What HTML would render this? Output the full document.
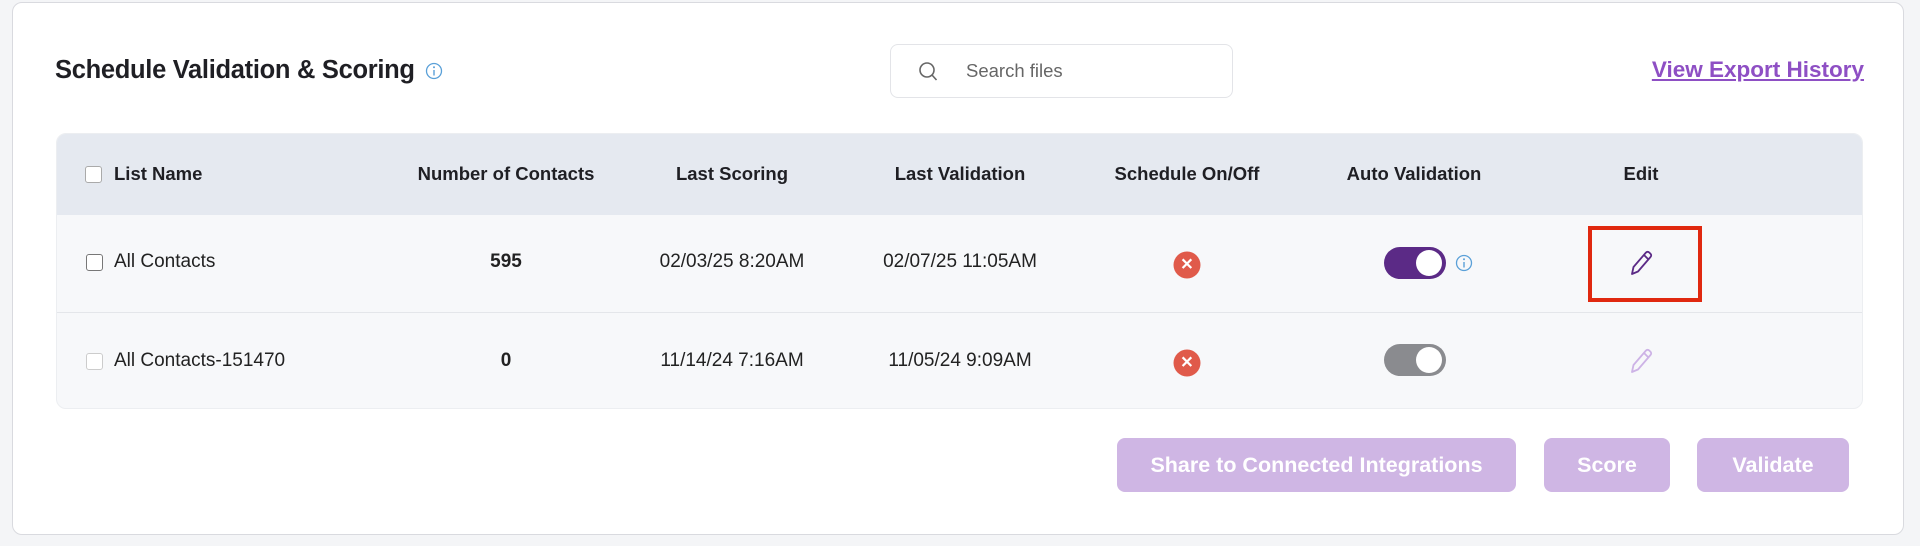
<!DOCTYPE html>
<html><head><style>
*{box-sizing:border-box;margin:0;padding:0}
body{width:1920px;height:546px;background:#f4f5f7;font-family:"Liberation Sans",sans-serif;position:relative;overflow:hidden;color:#222}
.card{position:absolute;left:12px;top:2px;width:1892px;height:533px;background:#fff;border:1px solid #d9dadf;border-radius:10px}
.abs{position:absolute}
.title{left:55px;top:56px;font-size:25.5px;font-weight:bold;color:#1f1f24;letter-spacing:-0.3px}
.search{left:890px;top:44px;width:343px;height:54px;border:1px solid #e3e4e8;border-radius:8px}
.link{right:56px;top:57px;font-size:22.5px;font-weight:bold;color:#8e4fc4;text-decoration:underline}
.table{left:56px;top:133px;width:1807px;height:276px;border-radius:10px;background:#f7f8fa;overflow:hidden;border:1px solid #eceef1}
.hdr{position:absolute;left:0;top:0;width:100%;height:81px;background:#e5e9f0}
.sep{position:absolute;left:0;top:178px;width:100%;height:1px;background:#e4e6ea}
.c{position:absolute;transform:translate(-50%,-50%);white-space:nowrap;font-size:19px}
.h{font-weight:bold;font-size:18.5px;color:#1f1f24}
.cb{position:absolute;width:17px;height:17px;border:1.5px solid #777;border-radius:3px;background:#fff}
.x{width:27px;height:27px;border-radius:50%;background:#e05a4a;color:#fff;font-weight:bold;font-size:16px;line-height:27px;text-align:center}
.tog{width:62px;height:32px;border-radius:16px}
.tog::after{content:"";position:absolute;right:4px;top:3px;width:26px;height:26px;border-radius:50%;background:#fff}
.btn{position:absolute;top:438px;height:54px;background:#cfb6e4;border-radius:8px;color:#fff;font-weight:bold;font-size:21.5px;line-height:54px;text-align:center}
</style></head><body>
<div class="card"></div>
<div class="abs title">Schedule Validation &amp; Scoring</div>
<svg class="abs" style="left:425px;top:62px" width="18" height="18" viewBox="0 0 18 18"><circle cx="9" cy="9" r="7.5" fill="none" stroke="#5aa0d8" stroke-width="1.3"/><circle cx="9" cy="5.3" r="1" fill="#5aa0d8"/><path d="M9 8v5.5" stroke="#5aa0d8" stroke-width="1.4"/></svg>
<div class="abs search"></div>
<svg class="abs" style="left:918px;top:61px" width="20" height="22" viewBox="0 0 20 22"><circle cx="9" cy="9" r="7" fill="none" stroke="#666" stroke-width="1.6"/><path d="M14 14l4.5 5" stroke="#666" stroke-width="1.6"/></svg>
<div class="abs" style="left:966px;top:60px;font-size:18.5px;color:#666">Search files</div>
<div class="abs link">View Export History</div>
<div class="abs table">
<div class="hdr"></div><div class="sep"></div>
</div>
<div class="cb" style="left:85px;top:166px;border-color:#aaa"></div>
<div class="abs h" style="left:114px;top:163px">List Name</div>
<div class="c h" style="left:506px;top:174px">Number of Contacts</div>
<div class="c h" style="left:732px;top:174px">Last Scoring</div>
<div class="c h" style="left:960px;top:174px">Last Validation</div>
<div class="c h" style="left:1187px;top:174px">Schedule On/Off</div>
<div class="c h" style="left:1414px;top:174px">Auto Validation</div>
<div class="c h" style="left:1641px;top:174px">Edit</div>

<div class="cb" style="left:86px;top:254px"></div>
<div class="abs" style="left:114px;top:251px;font-size:19px">All Contacts</div>
<div class="c" style="left:506px;top:262px;font-weight:bold">595</div>
<div class="c" style="left:732px;top:262px">02/03/25 8:20AM</div>
<div class="c" style="left:960px;top:262px">02/07/25 11:05AM</div>
<div class="c x" style="left:1187px;top:265px">✕</div>
<div class="c tog" style="left:1415px;top:263px;background:#5b2a86"></div>
<svg class="abs" style="left:1455px;top:254px" width="18" height="18" viewBox="0 0 18 18"><circle cx="9" cy="9" r="7.5" fill="none" stroke="#5aa0d8" stroke-width="1.3"/><circle cx="9" cy="5.3" r="1" fill="#5aa0d8"/><path d="M9 8v5.5" stroke="#5aa0d8" stroke-width="1.4"/></svg>
<div class="abs" style="left:1588px;top:226px;width:114px;height:76px;border:4px solid #e0280f"></div>
<svg class="abs" style="left:1627px;top:249px" width="28" height="28" viewBox="0 0 28 28"><path d="M5 25l1.5-7L19 3.5a2.2 2.2 0 013.2 0l1.3 1.3a2.2 2.2 0 010 3.2L11 22.5z M17 6l5 5" fill="none" stroke="#5b2a86" stroke-width="1.8" stroke-linejoin="round"/></svg>

<div class="cb" style="left:86px;top:353px;border-color:#ccc"></div>
<div class="abs" style="left:114px;top:350px;font-size:19px">All Contacts-151470</div>
<div class="c" style="left:506px;top:361px;font-weight:bold">0</div>
<div class="c" style="left:732px;top:361px">11/14/24 7:16AM</div>
<div class="c" style="left:960px;top:361px">11/05/24 9:09AM</div>
<div class="c x" style="left:1187px;top:363px">✕</div>
<div class="c tog" style="left:1415px;top:360px;background:#8a8b8f"></div>
<svg class="abs" style="left:1627px;top:347px" width="28" height="28" viewBox="0 0 28 28"><path d="M5 25l1.5-7L19 3.5a2.2 2.2 0 013.2 0l1.3 1.3a2.2 2.2 0 010 3.2L11 22.5z M17 6l5 5" fill="none" stroke="#cdb3e6" stroke-width="1.8" stroke-linejoin="round"/></svg>

<div class="btn" style="left:1117px;width:399px">Share to Connected Integrations</div>
<div class="btn" style="left:1544px;width:126px">Score</div>
<div class="btn" style="left:1697px;width:152px">Validate</div>
</body></html>
